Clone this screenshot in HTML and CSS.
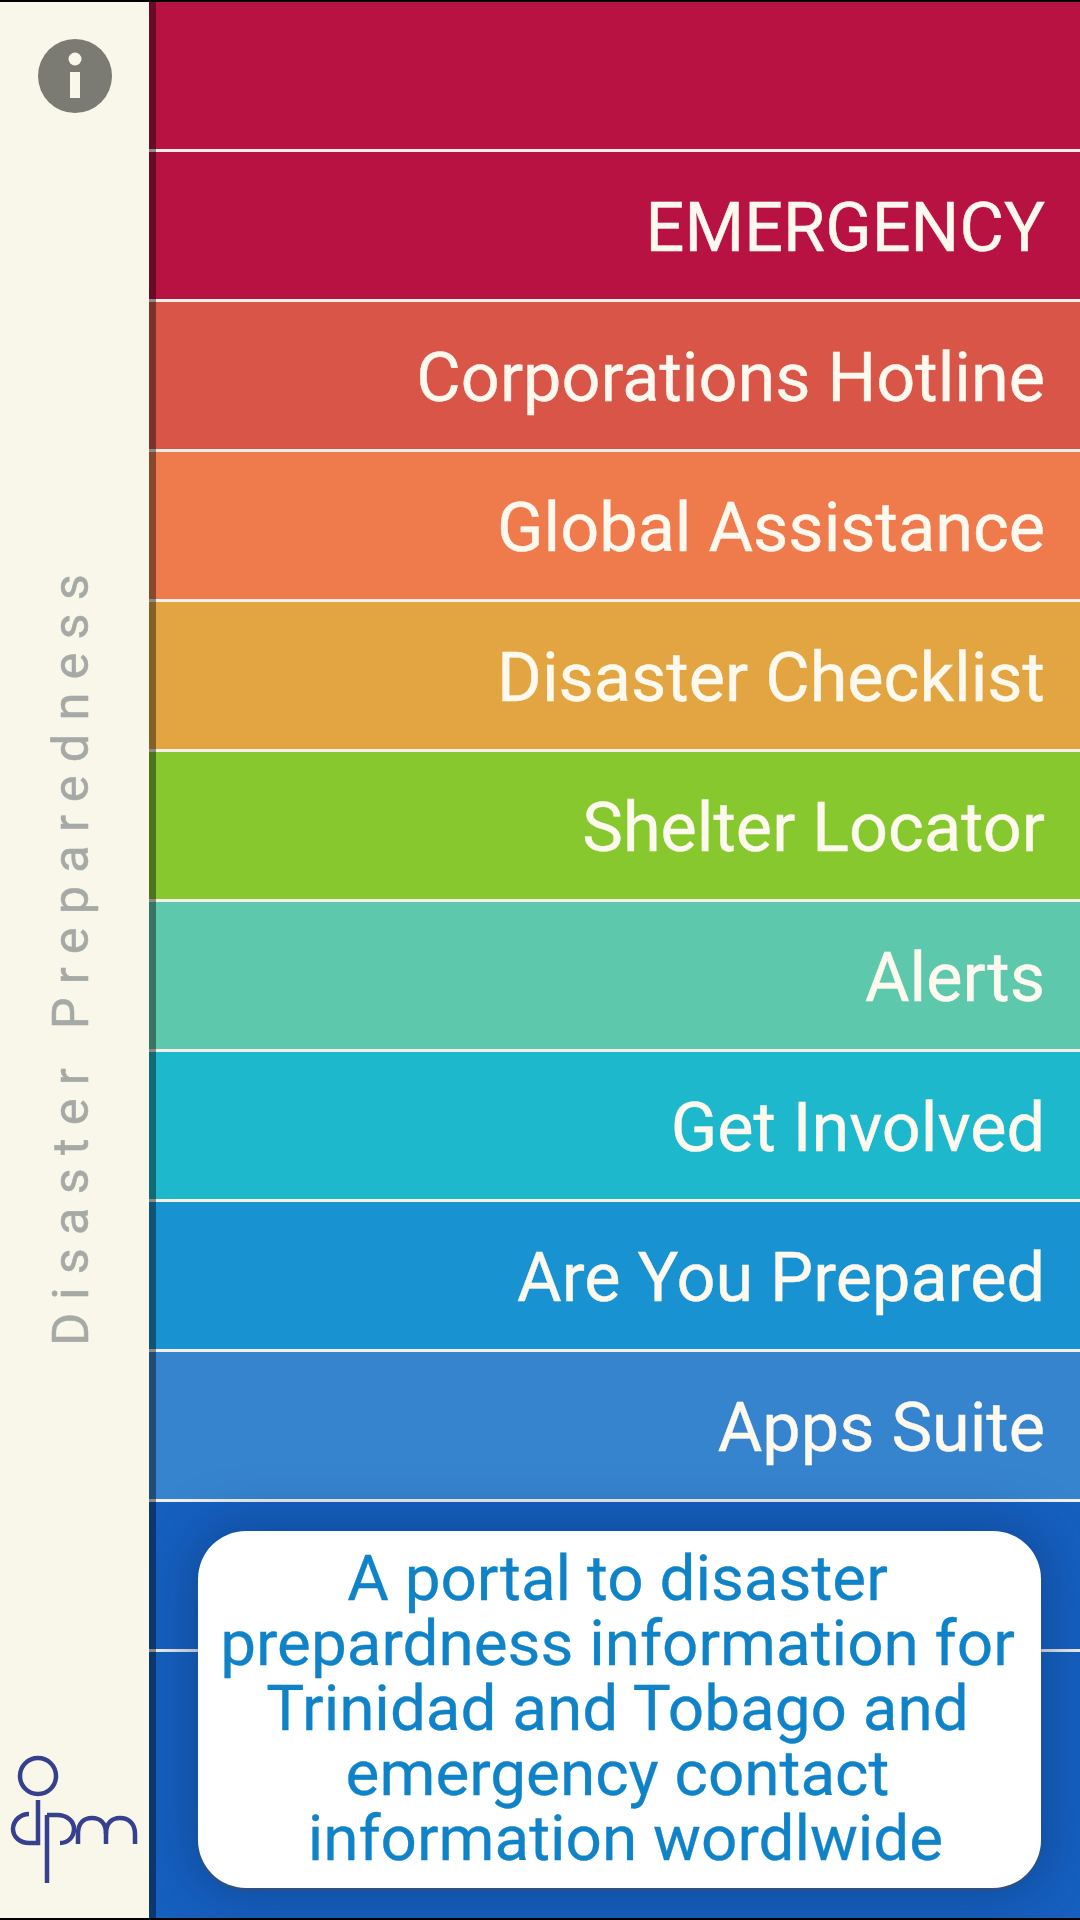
FILE: index.html
```html
<!DOCTYPE html>
<html lang="en">
<head>
	<meta charset="UTF-8">
	<title>Disaster Preparedness</title>
	<link rel="stylesheet" href="styles.css">
</head>
<body>
	<div class="screen">
		<div class="side">
			<svg class="info" width="74" height="74" viewBox="0 0 74 74">
				<circle cx="37" cy="37" r="37" fill="#7b7b73"/>
				<circle cx="37" cy="20" r="6.5" fill="#f9f7ea"/>
				<rect x="32" y="33" width="10" height="26" fill="#f9f7ea"/>
			</svg>
			<div class="side-title">Disaster Preparedness</div>
			<svg class="logo" width="140" height="140" viewBox="0 0 140 140" fill="none" stroke="#36408f" stroke-width="4.5">
				<circle cx="38" cy="26" r="18"/>
				<path d="M38 50V93H29C20 93 13 87 13 79S20 64 29 64"/>
				<path d="M47 65V133"/>
				<path d="M47 65H57C67 65 74 71 74 79S68 93 60 93"/>
				<path d="M78 94V84C78 73 84 68 92 68S106 73 106 84V94"/>
				<path d="M106 84C106 73 112 68 120 68S135 73 135 84V94"/>
			</svg>
		</div>
		<div class="menu">
			<div class="row r0"></div>
			<div class="row r1">EMERGENCY</div>
			<div class="row r2">Corporations Hotline</div>
			<div class="row r3">Global Assistance</div>
			<div class="row r4">Disaster Checklist</div>
			<div class="row r5">Shelter Locator</div>
			<div class="row r6">Alerts</div>
			<div class="row r7">Get Involved</div>
			<div class="row r8">Are You Prepared</div>
			<div class="row r9">Apps Suite</div>
			<div class="row r10"></div>
			<div class="row r10 last"></div>
			<div class="card">A portal to disaster prepardness information for Trinidad and Tobago and emergency contact &nbsp;information wordlwide</div>
		</div>
	</div>
</body>
</html>
```

FILE: styles.css
```css
* {
	margin: 0;
	padding: 0;
	box-sizing: border-box;
}
body {
	width: 1080px;
	height: 1920px;
	overflow: hidden;
	background: #000;
	font-family: Roboto, sans-serif;
}
.screen {
	display: flex;
	height: 1916px;
	margin-top: 2px;
}
.side {
	position: relative;
	width: 149px;
	background: #f9f7ea;
}
.info {
	position: absolute;
	left: 38px;
	top: 37px;
}
.side-title {
	position: absolute;
	left: 43px;
	bottom: 572px;
	writing-mode: vertical-rl;
	transform: rotate(180deg);
	font-size: 50.5px;
	letter-spacing: 13.2px;
	line-height: 56px;
	color: #a6aaa6;
	-webkit-text-stroke: 0.5px #a6aaa6;
	white-space: nowrap;
}
.logo {
	position: absolute;
	left: 0;
	top: 1748px;
	overflow: visible;
}
.menu {
	position: relative;
	flex: 1;
	display: flex;
	flex-direction: column;
	overflow: hidden;
}
.menu::before {
	content: "";
	position: absolute;
	left: 0;
	top: 0;
	bottom: 0;
	width: 7px;
	background: rgba(0, 0, 0, 0.42);
}
.row {
	display: flex;
	align-items: center;
	justify-content: flex-end;
	flex: none;
	height: 150px;
	padding: 5px 35px 0 0;
	border-bottom: 3px solid #f4f0e8;
	font-size: 68.4px;
	color: #fdf9ef;
	-webkit-text-stroke: 0.4px #fdf9ef;
}
.last {
	flex: 1;
	border-bottom: 0;
}
.r0, .r1 { background: #b81242; }
.r2 { background: #d95548; }
.r3 { background: #ef7b4c; }
.r4 { background: #e2a541; }
.r5 { background: #86c82d; }
.r6 { background: #5ec8ac; }
.r7 { background: #1eb8cd; }
.r8 { background: #1992d1; }
.r9 { background: #3784ce; }
.r10 { background: #1660c0; }
.card {
	position: absolute;
	left: 49px;
	top: 1529px;
	width: 843px;
	height: 357px;
	padding: 15px 24px 0 20px;
	background: #fff;
	border-radius: 48px;
	box-shadow: 0 2px 2px rgba(80, 80, 80, 0.6), 0 0 50px 12px rgba(10, 50, 110, 0.4);
	color: #0f82c8;
	font-size: 63.8px;
	line-height: 65px;
	text-align: center;
	-webkit-text-stroke: 0.3px #0f82c8;
}
```
